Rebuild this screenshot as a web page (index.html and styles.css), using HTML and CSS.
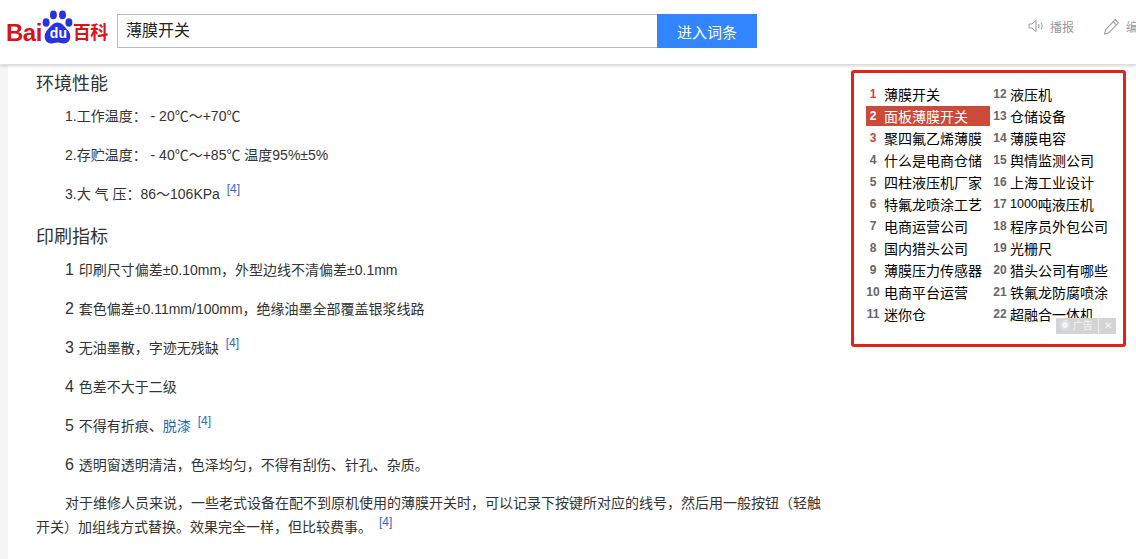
FILE: index.html
```html
<!DOCTYPE html>
<html lang="zh-CN">
<head>
    <meta charset="UTF-8">
    <title>薄膜开关_百度百科</title>
    <link rel="stylesheet" href="styles.css">
</head>
<body>
    <header class="top-bar">
        <div class="logo">
            <span class="logo-bai">Bai</span>
            <span class="logo-du">
                <svg class="logo-paw" viewBox="0 0 34 36" width="34" height="36">
                    <ellipse cx="4.500" cy="13" rx="3.800" ry="4.600" fill="#2932e1"/>
                    <ellipse cx="12.500" cy="4.800" rx="3.800" ry="4.800" fill="#2932e1"/>
                    <ellipse cx="22.500" cy="4.800" rx="3.800" ry="4.800" fill="#2932e1"/>
                    <ellipse cx="29.500" cy="13" rx="3.800" ry="4.600" fill="#2932e1"/>
                    <path d="M17 13c5 0 7 4 11 8 5 5 4 15-4 15-3 0-4-1-7-1s-4 1-7 1c-8 0-9-10-4-15 4-4 6-8 11-8z" fill="#2932e1"/>
                </svg>
                <span class="logo-du-text">du</span>
            </span>
            <span class="logo-bk">百科</span>
        </div>
        <div class="search">
            <div class="search-input">薄膜开关</div>
            <button class="search-btn">进入词条</button>
        </div>
        <div class="tools">
            <span class="tool">
                <svg viewBox="0 0 16 14" width="16" height="14" fill="none" stroke="#9b9b9b">
                    <path d="M1 5h3l4-3.500v11L4 9H1z"/>
                    <path d="M10.500 5c.8 1.200.8 2.800 0 4M13 3.500c1.400 2 1.400 5 0 7"/>
                </svg>
                播报
            </span>
            <span class="tool">
                <svg viewBox="0 0 16 16" width="17" height="17" fill="none" stroke="#9b9b9b">
                    <path d="M11.500 1.500l3 3-9 9.500-4 1 1-4z"/>
                    <path d="M9.500 3.500l3 3"/>
                </svg>
                编辑
            </span>
        </div>
    </header>

    <div class="page">
        <div class="side-strip"></div>
        <main class="article">
            <h2>环境性能</h2>
            <p class="indent">1.工作温度： - 20℃～+70℃</p>
            <p class="indent">2.存贮温度： - 40℃～+85℃ 温度95%±5%</p>
            <p class="indent">3.大 气 压：86～106KPa <sup>[4]</sup></p>
            <h2 class="second">印刷指标</h2>
            <p class="indent"><span class="num">1</span> 印刷尺寸偏差±0.10mm，外型边线不清偏差±0.1mm</p>
            <p class="indent"><span class="num">2</span> 套色偏差±0.11mm/100mm，绝缘油墨全部覆盖银浆线路</p>
            <p class="indent"><span class="num">3</span> 无油墨散，字迹无残缺 <sup>[4]</sup></p>
            <p class="indent"><span class="num">4</span> 色差不大于二级</p>
            <p class="indent"><span class="num">5</span> 不得有折痕、<a href="#">脱漆</a> <sup>[4]</sup></p>
            <p class="indent"><span class="num">6</span> 透明窗透明清洁，色泽均匀，不得有刮伤、针孔、杂质。</p>
            <p class="indent wrap">对于维修人员来说，一些老式设备在配不到原机使用的薄膜开关时，可以记录下按键所对应的线号，然后用一般按钮（轻触开关）加组线方式替换。效果完全一样，但比较费事。 <sup>[4]</sup></p>
        </main>
        <aside class="ad-box">
            <ul class="ad-list">
                <li><b class="hot">1</b>薄膜开关</li>
                <li><b>12</b>液压机</li>
                <li class="active"><b>2</b>面板薄膜开关</li>
                <li><b>13</b>仓储设备</li>
                <li><b class="hot">3</b>聚四氟乙烯薄膜</li>
                <li><b>14</b>薄膜电容</li>
                <li><b>4</b>什么是电商仓储</li>
                <li><b>15</b>舆情监测公司</li>
                <li><b>5</b>四柱液压机厂家</li>
                <li><b>16</b>上海工业设计</li>
                <li><b>6</b>特氟龙喷涂工艺</li>
                <li><b>17</b><span class="small-digits">1000</span>吨液压机</li>
                <li><b>7</b>电商运营公司</li>
                <li><b>18</b>程序员外包公司</li>
                <li><b>8</b>国内猎头公司</li>
                <li><b>19</b>光栅尺</li>
                <li><b>9</b>薄膜压力传感器</li>
                <li><b>20</b>猎头公司有哪些</li>
                <li><b>10</b>电商平台运营</li>
                <li><b>21</b>铁氟龙防腐喷涂</li>
                <li><b>11</b>迷你仓</li>
                <li><b>22</b>超融合一体机</li>
            </ul>
            <div class="ad-tag">
                <span class="ad-tag-label">◉ 广告</span>
                <span class="ad-tag-close">✕</span>
            </div>
        </aside>
    </div>
</body>
</html>
```

FILE: styles.css
```css
* {
    box-sizing: border-box;
}

html, body {
    margin: 0;
    height: 559px;
    overflow: hidden;
}

body {
    font-family: "Liberation Sans", "Noto Sans CJK SC", sans-serif;
    font-size: 14px;
    color: #333;
    background: #fff;
}

/* header */
.top-bar {
    height: 65px;
    display: flex;
    align-items: flex-start;
    background: #fff;
    border-bottom: 1px solid #ddd;
    box-shadow: 0 1px 3px rgba(0, 0, 0, 0.18);
    position: relative;
    overflow: hidden;
}

.logo {
    width: 117px;
    height: 50px;
    padding: 23px 0 0 6px;
    display: flex;
    align-items: flex-start;
    color: #d8131a;
    font-weight: bold;
    flex-shrink: 0;
}

.logo-bai {
    font-size: 24px;
    line-height: 20px;
    letter-spacing: -0.5px;
}

.logo-du {
    width: 31px;
    height: 34px;
    margin: -13px 0 0 0;
    position: relative;
    display: block;
}

.logo-paw {
    width: 31px;
    height: 34px;
    display: block;
}

.logo-du-text {
    position: absolute;
    left: 8px;
    top: 14px;
    color: #fff;
    font-size: 14px;
    line-height: 18px;
}

.logo-bk {
    font-size: 18px;
    line-height: 20px;
    letter-spacing: -0.5px;
}

.search {
    display: flex;
    margin-top: 14px;
    flex-shrink: 0;
}

.search-input {
    width: 540px;
    height: 34px;
    border: 1px solid #bbb;
    border-right: none;
    padding-left: 8px;
    font-size: 16px;
    line-height: 32px;
    color: #222;
}

.search-btn {
    width: 100px;
    height: 34px;
    border: none;
    padding: 0;
    background: #3385ff;
    color: #fff;
    font-family: inherit;
    font-size: 15px;
}

.tools {
    display: flex;
    gap: 29px;
    margin: 17px 0 0 271px;
    flex-shrink: 0;
}

.tool {
    display: flex;
    align-items: center;
    gap: 6px;
    height: 18px;
    color: #999;
    font-size: 12px;
    white-space: nowrap;
}

/* body */
.page {
    display: flex;
    height: 494px;
    overflow: hidden;
}

.side-strip {
    width: 8px;
    background: #f5f5f5;
    flex-shrink: 0;
}

.article {
    width: 790px;
    margin-left: 28px;
    padding-top: 7px;
    flex-shrink: 0;
}

.article h2 {
    margin: 0 0 8px;
    font-size: 18px;
    font-weight: normal;
    line-height: 24px;
    color: #333;
}

.article h2.second {
    margin: 19px 0 9px;
}

.article p {
    margin: 0 0 15px;
    line-height: 24px;
}

.indent {
    text-indent: 29px;
}

.num {
    font-size: 16px;
    margin-right: 1px;
}

.article a {
    color: #136ec2;
    text-decoration: none;
}

.article sup {
    font-size: 12px;
    line-height: 0;
    color: #3366cc;
    margin-left: 3px;
    vertical-align: 6px;
}

.article p.wrap {
    margin-top: -1px;
}

/* ad box */
.ad-box {
    width: 275px;
    height: 277px;
    margin: 5px 0 0 25px;
    padding: 10px 12px 0;
    border: 3px solid #e2231a;
    border-radius: 3px;
    position: relative;
    flex-shrink: 0;
    background: #fff;
}

.ad-list {
    list-style: none;
    margin: 0;
    padding: 0;
    display: grid;
    grid-template-columns: 124px 126px;
    grid-auto-rows: 22px;
}

.ad-list li {
    display: flex;
    align-items: center;
    height: 22px;
    color: #000;
    font-size: 14px;
    white-space: nowrap;
}

.ad-list b {
    width: 14px;
    margin-right: 4px;
    flex-shrink: 0;
    text-align: center;
    font-size: 12px;
    color: #666;
}

.ad-list li:nth-child(even) b {
    margin: 0 3px;
}

.ad-list b.hot {
    color: #c9483c;
}

.small-digits {
    font-size: 12.500px;
}

.ad-list li.active {
    height: 20px;
    margin: 1px 0;
    background: #cc4a3a;
    color: #fff;
}

.ad-list li.active b {
    color: #fff;
}

.ad-tag {
    position: absolute;
    right: 7px;
    bottom: 10px;
    width: 60px;
    height: 16px;
    display: flex;
    background: #d4d4d4;
    color: #f4f4f4;
    font-size: 10px;
    line-height: 16px;
}

.ad-tag-label {
    flex: 1;
    padding-left: 4px;
    white-space: nowrap;
}

.ad-tag-close {
    width: 18px;
    text-align: center;
    border-left: 1px solid #eee;
}
```
